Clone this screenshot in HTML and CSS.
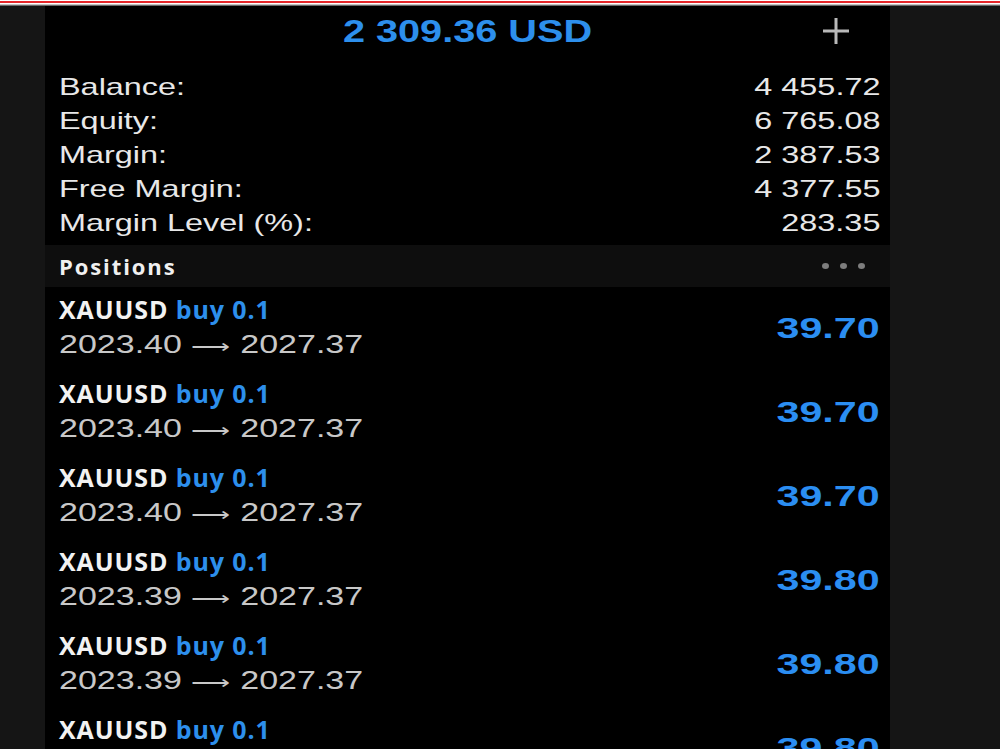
FILE: index.html
```html
<!DOCTYPE html>
<html lang="en">
<head>
<meta charset="utf-8">
<title>Trade</title>
<link rel="stylesheet" href="styles.css">
</head>
<body>
<div class="topline"></div>
<div class="screen">
  <aside class="gutter gutter-left"></aside>
  <main class="app">
    <header class="header">
      <span></span>
      <h1 class="total"><span class="wide">2 309.36 USD</span></h1>
      <button class="add" aria-label="Add">
        <svg width="28" height="28" viewBox="0 0 28 28"><path d="M14 1v26M1 14h26" stroke="#b9b9b9" stroke-width="3" fill="none"/></svg>
      </button>
    </header>

    <section class="summary">
      <div class="row"><span class="label wide">Balance:</span><span class="value wide-r">4 455.72</span></div>
      <div class="row"><span class="label wide">Equity:</span><span class="value wide-r">6 765.08</span></div>
      <div class="row"><span class="label wide">Margin:</span><span class="value wide-r">2 387.53</span></div>
      <div class="row"><span class="label wide">Free Margin:</span><span class="value wide-r">4 377.55</span></div>
      <div class="row"><span class="label wide">Margin Level (%):</span><span class="value wide-r">283.35</span></div>
    </section>

    <div class="section-head">
      <span class="section-title">Positions</span>
      <span class="more"><i></i><i></i><i></i></span>
    </div>

    <ul class="positions">
      <li class="position">
        <div class="info">
          <div class="symbol">XAUUSD <em>buy 0.1</em></div>
          <div class="prices"><span class="wide">2023.40 <span class="arrow">⟶</span> 2027.37</span></div>
        </div>
        <div class="profit"><span class="wide-r">39.70</span></div>
      </li>
      <li class="position">
        <div class="info">
          <div class="symbol">XAUUSD <em>buy 0.1</em></div>
          <div class="prices"><span class="wide">2023.40 <span class="arrow">⟶</span> 2027.37</span></div>
        </div>
        <div class="profit"><span class="wide-r">39.70</span></div>
      </li>
      <li class="position">
        <div class="info">
          <div class="symbol">XAUUSD <em>buy 0.1</em></div>
          <div class="prices"><span class="wide">2023.40 <span class="arrow">⟶</span> 2027.37</span></div>
        </div>
        <div class="profit"><span class="wide-r">39.70</span></div>
      </li>
      <li class="position">
        <div class="info">
          <div class="symbol">XAUUSD <em>buy 0.1</em></div>
          <div class="prices"><span class="wide">2023.39 <span class="arrow">⟶</span> 2027.37</span></div>
        </div>
        <div class="profit"><span class="wide-r">39.80</span></div>
      </li>
      <li class="position">
        <div class="info">
          <div class="symbol">XAUUSD <em>buy 0.1</em></div>
          <div class="prices"><span class="wide">2023.39 <span class="arrow">⟶</span> 2027.37</span></div>
        </div>
        <div class="profit"><span class="wide-r">39.80</span></div>
      </li>
      <li class="position">
        <div class="info">
          <div class="symbol">XAUUSD <em>buy 0.1</em></div>
          <div class="prices"><span class="wide">2023.39 <span class="arrow">⟶</span> 2027.37</span></div>
        </div>
        <div class="profit"><span class="wide-r">39.80</span></div>
      </li>
    </ul>
  </main>
  <aside class="gutter gutter-right"></aside>
</div>
</body>
</html>
```

FILE: styles.css
```css
* { box-sizing: border-box; }

html, body {
  margin: 0;
  height: 100%;
  background: #000;
  overflow: hidden;
}

body {
  display: flex;
  flex-direction: column;
  font-family: "Liberation Sans", Arial, sans-serif;
  color: #e6e6e6;
}

/* thin red rule along the top edge */
.topline {
  height: 6px;
  flex: none;
  background: linear-gradient(#ffffff 0 1px, #e5262a 1px 3px, #ffffff 3px 4px, #c4c4c4 4px 5px, #6a6a6a 5px 6px);
}

.screen {
  flex: 1;
  display: flex;
  min-height: 0;
}

.gutter { background: #151515; }
.gutter-left { width: 45px; flex: none; }
.gutter-right { flex: 1; }

.app {
  width: 845px;
  flex: none;
  background: #000;
  overflow: hidden;
}

/* horizontally widened glyphs */
.wide, .wide-r {
  display: inline-block;
  transform: scaleX(1.35);
}
.wide { transform-origin: left center; }
.wide-r { transform-origin: right center; }

/* header */
.header {
  height: 50px;
  display: grid;
  grid-template-columns: 1fr auto 1fr;
  align-items: center;
}

.total {
  margin: 0;
  font-size: 32px;
  font-weight: 700;
  color: #2d8fec;
  line-height: 50px;
}
.total .wide {
  transform: scaleX(1.24);
  transform-origin: center;
}

.add {
  justify-self: end;
  margin-right: 40px;
  padding: 0;
  border: 0;
  background: none;
  width: 28px;
  height: 28px;
  display: flex;
}

/* account summary */
.summary {
  padding: 14px 10px 5px 14px;
}

.row {
  height: 34px;
  display: flex;
  justify-content: space-between;
  align-items: center;
  font-size: 24px;
  color: #e8e8e8;
}

/* positions */
.section-head {
  height: 42px;
  background: #0e0e0e;
  display: flex;
  align-items: center;
  justify-content: space-between;
  padding: 0 25px 0 14px;
}

.section-title {
  font-family: "Open Sans", "Liberation Sans", sans-serif;
  font-weight: 700;
  font-size: 22px;
  letter-spacing: 1.9px;
  color: #f0f0f0;
}

.more {
  display: flex;
  gap: 11px;
}
.more i {
  width: 7px;
  height: 6px;
  border-radius: 50%;
  background: #7e7e7e;
}

.positions {
  list-style: none;
  margin: 0;
  padding: 0;
}

.position {
  height: 84px;
  padding: 6px 10px 10px 14px;
  display: flex;
  justify-content: space-between;
  align-items: center;
}

.symbol {
  height: 34px;
  line-height: 34px;
  font-family: "Open Sans", "Liberation Sans", sans-serif;
  font-weight: 700;
  font-size: 25px;
  letter-spacing: 0.9px;
  color: #f2f2f2;
}
.symbol em {
  font-style: normal;
  color: #2d8fec;
}

.prices {
  height: 36px;
  line-height: 36px;
  font-size: 25px;
  color: #c8c8c8;
}
.prices .wide { transform: scaleX(1.36); }

.arrow {
  font-family: "DejaVu Sans", sans-serif;
  font-size: 20px;
  font-weight: 300;
}

.profit {
  padding-top: 3px;
  font-size: 29px;
  font-weight: 700;
  color: #2b8ef2;
}
.profit .wide-r { transform: scaleX(1.42); }
```
